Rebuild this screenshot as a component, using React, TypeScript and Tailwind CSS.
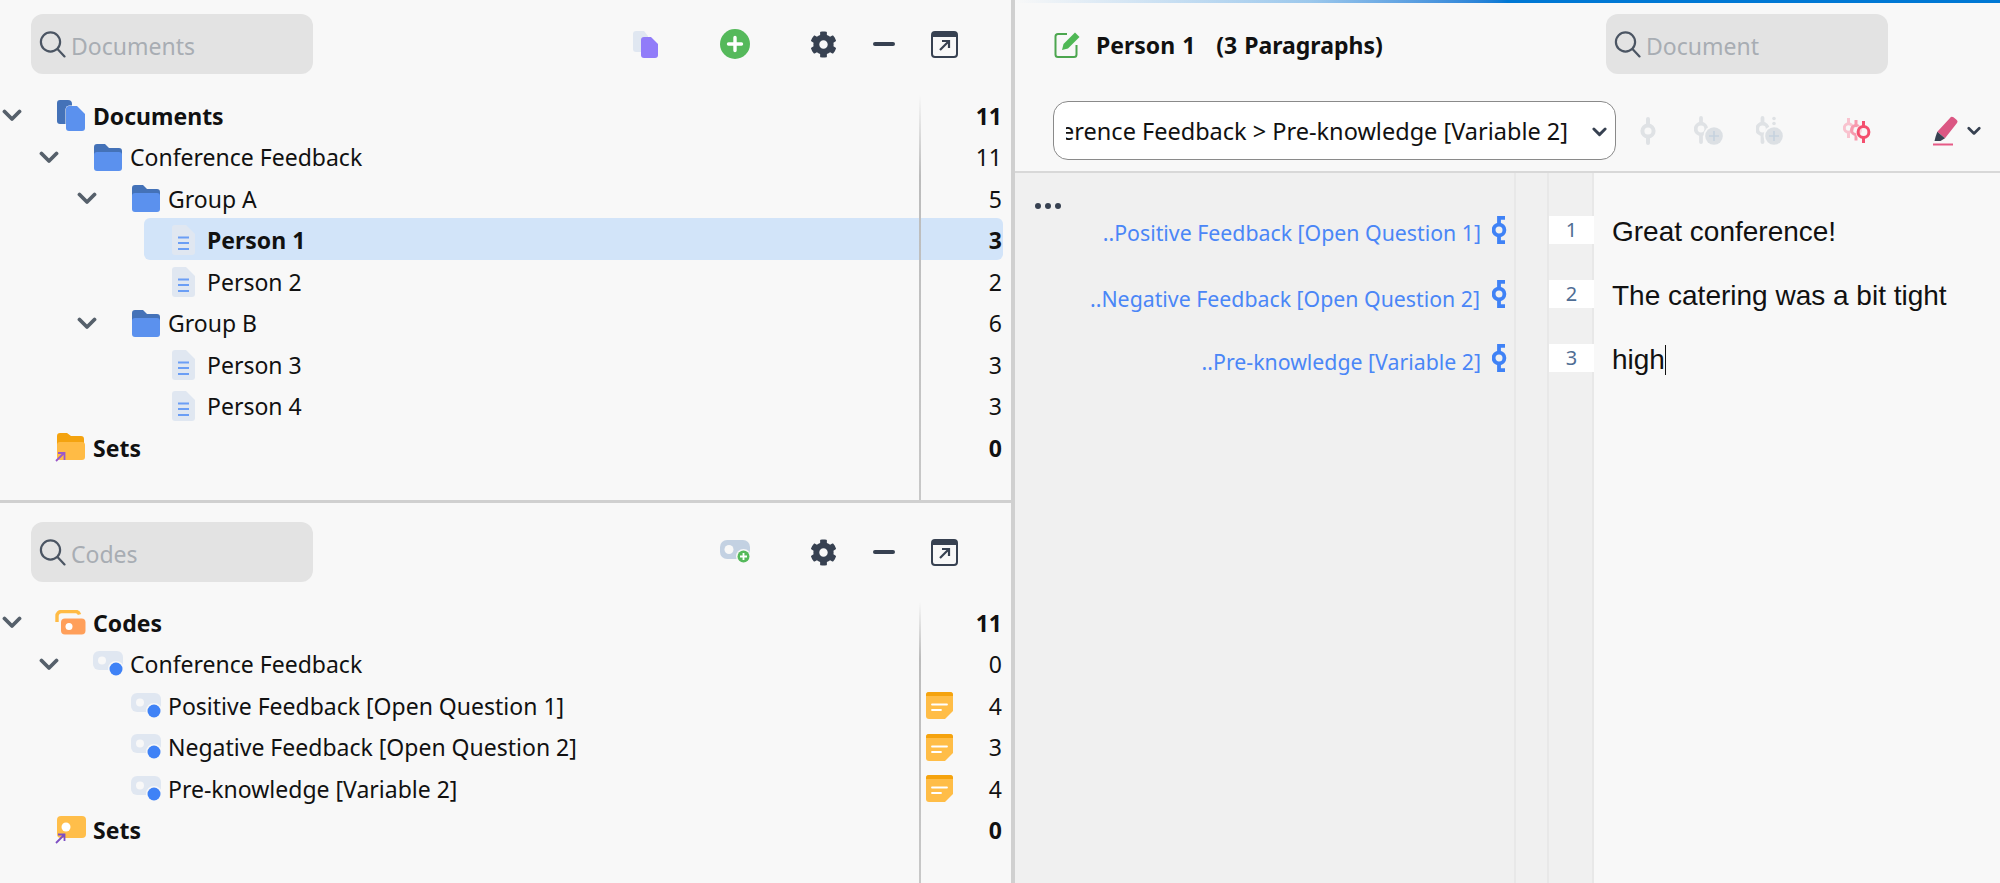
import React from "react";
import { FaCog } from "react-icons/fa";

const Search = () => (
  <svg width="27" height="27" viewBox="0 0 27 27" fill="none" stroke="#4b5563" strokeWidth="2.2" strokeLinecap="round" className="shrink-0">
    <circle cx="11.5" cy="11" r="9.6" />
    <path d="M18.5 18l7 7.4" />
  </svg>
);

const Chevron = ({ small, mid }: { small?: boolean; mid?: boolean }) => (
  <svg width={small ? 14 : mid ? 15 : 20} height={small ? 10 : mid ? 10 : 13} viewBox="0 0 20 13" fill="none" stroke={small || mid ? "#374151" : "#56606b"} strokeWidth="3.8" strokeLinecap="round" strokeLinejoin="round">
    <path d="M2.5 2.5 10 10l7.5-7.5" />
  </svg>
);

const DocsIcon = () => (
  <svg width="28" height="31" viewBox="0 0 28 31">
    <path d="M3 0h8a4 4 0 0 1 4 4v20H3a3 3 0 0 1-3-3V3a3 3 0 0 1 3-3z" fill="#4472b8" />
    <path d="M12 6h8l8 8v14a3 3 0 0 1-3 3H12a3 3 0 0 1-3-3V9a3 3 0 0 1 3-3z" fill="#f8f8f8" stroke="#f8f8f8" strokeWidth="1" />
    <path d="M12 6h8l8 8v14a3 3 0 0 1-3 3H12a3 3 0 0 1-3-3V9a3 3 0 0 1 3-3z" fill="#5b91ee" />
  </svg>
);

const Folder = () => (
  <svg width="28" height="27" viewBox="0 0 28 27">
    <path d="M3 0h8l4 4h10a3 3 0 0 1 3 3v8H0V3a3 3 0 0 1 3-3z" fill="#4472b8" />
    <path d="M3 8h22a3 3 0 0 1 3 3v13a3 3 0 0 1-3 3H3a3 3 0 0 1-3-3V11a3 3 0 0 1 3-3z" fill="#5b91ee" />
  </svg>
);

const DocIcon = () => (
  <svg width="23" height="30" viewBox="0 0 23 30">
    <path d="M3 0h11l9 9v18a3 3 0 0 1-3 3H3a3 3 0 0 1-3-3V3a3 3 0 0 1 3-3z" fill="#e0e7f1" />
    <path d="M6 12.5h11M6 18h11M6 24h11" stroke="#6b9ef5" strokeWidth="2" />
  </svg>
);

const SetFolder = () => (
  <svg width="31" height="30" viewBox="0 0 31 30">
    <path d="M5 0h7l4 3h10a3 3 0 0 1 3 3v8H2V3a3 3 0 0 1 3-3z" fill="#f4a30f" />
    <path d="M5 9h22a3 3 0 0 1 3 3v12a3 3 0 0 1-3 3H5a3 3 0 0 1-3-3V12a3 3 0 0 1 3-3z" fill="#ffbb45" />
    <path d="M1 28l8-8M3 20h6.500v7" fill="none" stroke="#9b59c9" strokeWidth="1.8" />
  </svg>
);

const CodesRoot = () => (
  <svg width="31" height="25" viewBox="0 0 31 25">
    <path d="M2 12V6a4.500 4.500 0 0 1 4.500-4.500h14a4 4 0 0 1 4 3" fill="none" stroke="#ffbb45" strokeWidth="3.400" />
    <rect x="6" y="8.500" width="24.500" height="16" rx="4" fill="#ff9f5a" />
    <circle cx="14" cy="16.500" r="3.500" fill="#fff" />
  </svg>
);

const CodeSet = () => (
  <svg width="31" height="28" viewBox="0 0 31 28">
    <rect x="2" y="0" width="29" height="22" rx="4" fill="#ffbe4a" />
    <circle cx="11" cy="11" r="4.500" fill="#fff" />
    <path d="M1 27l8-8M3 18.500h6.500V25" fill="none" stroke="#7d4fc4" strokeWidth="1.8" />
  </svg>
);

const CodeItem = () => (
  <svg width="30" height="26" viewBox="0 0 30 26">
    <rect x="0" y="0" width="30" height="19" rx="6" fill="#e0e7f1" />
    <circle cx="9" cy="9.500" r="4" fill="#f8f8f8" />
    <circle cx="23" cy="18" r="8" fill="#f8f8f8" />
    <circle cx="23" cy="18" r="6.500" fill="#3f82f6" />
  </svg>
);

const Memo = () => (
  <svg width="27" height="27" viewBox="0 0 27 27">
    <path d="M3 0h21a3 3 0 0 1 3 3v16l-8 8H3a3 3 0 0 1-3-3V3a3 3 0 0 1 3-3z" fill="#ffbd47" />
    <path d="M3 0h21a3 3 0 0 1 3 3v1H0V3a3 3 0 0 1 3-3z" fill="#f5a30e" />
    <path d="M6 12.500h15M6 18h9" stroke="#fff" strokeWidth="1.800" strokeLinecap="round" />
  </svg>
);

const PenIcon = () => (
  <svg width="26" height="28" viewBox="0 0 26 28" fill="none">
    <path d="M13 4H4a2.500 2.500 0 0 0-2.500 2.500v18A2.500 2.500 0 0 0 4 27h16a2.500 2.500 0 0 0 2.500-2.500V15" stroke="#4ca64f" strokeWidth="2" />
    <path d="M8 20l1.500-6L21 2.500 25.500 7 14 18.500z" fill="#4fb855" />
  </svg>
);

const AddDoc = () => (
  <svg width="25" height="27" viewBox="0 0 25 27">
    <path d="M3 0h8l4 5v16H3a3 3 0 0 1-3-3V3a3 3 0 0 1 3-3z" fill="#e0e7f1" />
    <path d="M11 6h7l7 7v11a3 3 0 0 1-3 3H11a3 3 0 0 1-3-3V9a3 3 0 0 1 3-3z" fill="#917cf9" />
  </svg>
);

const GreenPlus = () => (
  <svg width="30" height="30" viewBox="0 0 30 30">
    <circle cx="15" cy="15" r="15" fill="#55b95b" />
    <path d="M15 8.500v13M8.500 15h13" stroke="#fff" strokeWidth="3.400" strokeLinecap="round" />
  </svg>
);

const AddCode = () => (
  <svg width="31" height="24" viewBox="0 0 31 24">
    <rect x="0" y="0" width="30" height="19" rx="7" fill="#c3d1e2" />
    <circle cx="9" cy="9.500" r="4.500" fill="#f8f8f8" />
    <circle cx="23.500" cy="16.500" r="7.500" fill="#f8f8f8" />
    <circle cx="23.500" cy="16.500" r="6" fill="#55b95b" />
    <path d="M23.500 13v7M20 16.500h7" stroke="#fff" strokeWidth="1.800" />
  </svg>
);

const Minus = () => <div className="w-[22px] h-[4px] rounded-full bg-[#374151]" />;

const Expand = () => (
  <svg width="27" height="27" viewBox="0 0 27 27" fill="none">
    <rect x="1" y="1" width="25" height="25" rx="3" stroke="#374151" strokeWidth="2" />
    <path d="M1 3a2 2 0 0 1 2-2h21a2 2 0 0 1 2 2v3H1z" fill="#374151" />
    <path d="M9 19l9-9M11 10h7v7" stroke="#374151" strokeWidth="2.200" />
  </svg>
);

const Node = ({ color = "#dfe2e5" }: { color?: string }) => (
  <svg width="16" height="28" viewBox="0 0 16 28" fill="none" stroke={color} strokeWidth="4">
    <circle cx="8" cy="14" r="5.600" />
    <path d="M8 2v6M8 20v6" strokeLinecap="round" />
  </svg>
);

const NodePlus = ({ dots }: { dots?: boolean }) => (
  <svg width="30" height="29" viewBox="0 0 30 29" fill="none">
    <circle cx={dots ? 6.500 : 7} cy="13" r="5.300" stroke="#dfe2e5" strokeWidth="3.800" />
    <path d={dots ? "M6.500 2v5M6.500 19v7" : "M7 2v5M7 19v7"} stroke="#dfe2e5" strokeWidth="3.800" strokeLinecap="round" />
    {dots && <circle cx="18" cy="2.500" r="1.800" fill="#dfe2e5" />}
    {dots && <circle cx="18" cy="7.500" r="1.800" fill="#dfe2e5" />}
    <circle cx={dots ? 18 : 20} cy="20" r="10.500" fill="#f8f8f8" />
    <circle cx={dots ? 18 : 20} cy="20" r="8.800" fill="#dce0e4" />
    <path d={dots ? "M18 15v10M13 20h10" : "M20 15v10M15 20h10"} stroke="#c6d2de" strokeWidth="1.600" />
  </svg>
);

const RedNodes = () => (
  <svg width="28" height="27" viewBox="0 0 28 27" fill="none">
    <g stroke="#f9c3cf" strokeWidth="3">
      <circle cx="5.500" cy="11" r="4.200" />
      <path d="M5.500 1v6M5.500 15v6" />
    </g>
    <g stroke="#f79aae" strokeWidth="3">
      <circle cx="13" cy="13" r="4.500" />
      <path d="M13 3v6M13 17.500v6" />
    </g>
    <circle cx="20.500" cy="15" r="8" fill="#f8f8f8" fillOpacity="0.600" />
    <g stroke="#f4506f" strokeWidth="3">
      <circle cx="20.500" cy="15" r="5.400" />
      <path d="M20.500 4v5.500M20.500 20.500V26" />
    </g>
  </svg>
);

const Highlighter = () => (
  <svg width="26" height="31" viewBox="0 0 26 31">
    <path d="M18 3a2.500 2.500 0 0 1 3.500-.800l3 2.500a2.500 2.500 0 0 1 .3 3.500L13 23.300 5.300 16.700z" fill="#db5783" />
    <path d="M5.300 16.700 13 23.300 8.500 26H2.500L3.500 22z" fill="#374151" />
    <path d="M1 29.500h20" stroke="#e65a86" strokeWidth="2" />
  </svg>
);

const LinkNode = () => (
  <svg width="15" height="28" viewBox="0 0 15 28" fill="none" stroke="#3f82f6" strokeWidth="3.800">
    <circle cx="7" cy="14" r="5.400" />
    <path d="M7 8.600V1.900h6M7 19.400v6.700h6" />
  </svg>
);

const SearchBox = ({ label }: { label: string }) => (
  <div className="w-[282px] h-[60px] rounded-[12px] bg-[#e3e3e3] flex items-center pl-[8px] gap-[5px] shrink-0">
    <Search />
    <span className="text-[23px] text-[#a8adb3] relative top-[2px]">{label}</span>
  </div>
);

type RowProps = {
  indent: string;
  chevron?: boolean;
  icon: React.ReactNode;
  iconBox: string;
  label: string;
  count: number;
  bold?: boolean;
  selected?: boolean;
  memo?: boolean;
};

const Row = ({ indent, chevron, icon, iconBox, label, count, bold, selected, memo }: RowProps) => (
  <div className={`flex items-center h-[41.5px] text-[23px] text-[#111] ${bold ? "font-bold" : ""}`}>
    <div className={`relative flex items-center h-full flex-1 mr-[8px] ${indent}`}>
      {selected && <div className="absolute inset-x-0 -top-[1.500px] bottom-[1px] rounded-[6px] bg-[#d2e4f9]" />}
      <div className="relative w-[24px] h-full flex items-center justify-center shrink-0">{chevron && <Chevron />}</div>
      <div className={`relative flex items-center shrink-0 ${iconBox}`}>{icon}</div>
      <span className="relative whitespace-nowrap">{label}</span>
      <div className="relative ml-auto flex items-center pr-[1px]">
        {memo && <Memo />}
        <span className="w-[49px] text-right">{count}</span>
      </div>
    </div>
  </div>
);

const Divider = () => (
  <div className="absolute top-0 bottom-0 left-[919px] w-[2px] bg-linear-to-b from-[#f8f8f8] via-[#bcbcbc] via-20% to-[#c8c8c8] pointer-events-none z-10" />
);

const PanelTools = ({ first }: { first: React.ReactNode }) => (
  <div className="flex items-center h-[60px] shrink-0 pl-[31px]">{first}</div>
);

const Para = ({ n, label, text, labelClass }: { n: number; label: string; text: React.ReactNode; labelClass: string }) => (
  <div className="flex h-[28px] items-center">
    <div className="w-[501px] flex justify-end items-center pr-[9px] gap-[11px]">
      <span className={`text-[#4a86f7] text-[21.300px] whitespace-nowrap relative ${labelClass}`}>{label}</span>
      <LinkNode />
    </div>
    <div className="w-[33px]" />
    <div className="w-[45px] h-[28px] bg-white flex items-center justify-center text-[#4f6d94] text-[20px]">{n}</div>
    <div className="pl-[18px] font-['Liberation_Sans',sans-serif] text-[28px] text-[#111] whitespace-nowrap relative top-[2px]">{text}</div>
  </div>
);

export default function App() {
  return (
    <div className="w-[2000px] h-[883px] flex bg-[#f8f8f8] overflow-hidden font-['Noto_Sans',sans-serif]">
      <div className="w-[1011px] flex flex-col shrink-0">
        <div className="h-[500px] flex flex-col shrink-0 pt-[14px]">
          <PanelTools
            first={
              <>
                <SearchBox label="Documents" />
                <div className="ml-[320px]"><AddDoc /></div>
                <div className="ml-[62px]"><GreenPlus /></div>
                <FaCog className="ml-[60px] w-[27px] h-[27px] text-[#374151]" />
                <div className="ml-[36px]"><Minus /></div>
                <div className="ml-[36px]"><Expand /></div>
              </>
            }
          />
          <div className="relative flex-1 mt-[21px] pb-[5px]">
            <Divider />
            <Row indent="pl-0" chevron icon={<DocsIcon />} iconBox="w-[69px] pl-[33px]" label="Documents" count={11} bold />
            <Row indent="pl-[37px]" chevron icon={<Folder />} iconBox="w-[69px] pl-[33px]" label="Conference Feedback" count={11} />
            <Row indent="pl-[75px]" chevron icon={<Folder />} iconBox="w-[69px] pl-[33px]" label="Group A" count={5} />
            <div className="ml-[144px]">
              <Row indent="pl-0" selected icon={<DocIcon />} iconBox="w-[39px] pl-[4px]" label="Person 1" count={3} bold />
            </div>
            <div className="ml-[144px]">
              <Row indent="pl-0" icon={<DocIcon />} iconBox="w-[39px] pl-[4px]" label="Person 2" count={2} />
            </div>
            <Row indent="pl-[75px]" chevron icon={<Folder />} iconBox="w-[69px] pl-[33px]" label="Group B" count={6} />
            <div className="ml-[144px]">
              <Row indent="pl-0" icon={<DocIcon />} iconBox="w-[39px] pl-[4px]" label="Person 3" count={3} />
            </div>
            <div className="ml-[144px]">
              <Row indent="pl-0" icon={<DocIcon />} iconBox="w-[39px] pl-[4px]" label="Person 4" count={3} />
            </div>
            <Row indent="pl-0" icon={<SetFolder />} iconBox="w-[69px] pl-[31px]" label="Sets" count={0} bold />
          </div>
        </div>
        <div className="h-[3px] bg-[#d0d0d0] shrink-0" />
        <div className="flex-1 flex flex-col pt-[19px] min-h-0">
          <PanelTools
            first={
              <>
                <SearchBox label="Codes" />
                <div className="ml-[407px]"><AddCode /></div>
                <FaCog className="ml-[59px] w-[27px] h-[27px] text-[#374151]" />
                <div className="ml-[36px]"><Minus /></div>
                <div className="ml-[36px]"><Expand /></div>
              </>
            }
          />
          <div className="relative flex-1 mt-[20px]">
            <Divider />
            <Row indent="pl-0" chevron icon={<CodesRoot />} iconBox="w-[69px] pl-[31px]" label="Codes" count={11} bold />
            <Row indent="pl-[37px]" chevron icon={<CodeItem />} iconBox="w-[69px] pl-[32px]" label="Conference Feedback" count={0} />
            <Row indent="pl-[75px]" icon={<CodeItem />} iconBox="w-[69px] pl-[32px]" label="Positive Feedback [Open Question 1]" count={4} memo />
            <Row indent="pl-[75px]" icon={<CodeItem />} iconBox="w-[69px] pl-[32px]" label="Negative Feedback [Open Question 2]" count={3} memo />
            <Row indent="pl-[75px]" icon={<CodeItem />} iconBox="w-[69px] pl-[32px]" label="Pre-knowledge [Variable 2]" count={4} memo />
            <Row indent="pl-0" icon={<CodeSet />} iconBox="w-[69px] pl-[31px]" label="Sets" count={0} bold />
          </div>
        </div>
      </div>
      <div className="w-[4px] bg-[#d0d0d0] shrink-0" />
      <div className="flex-1 flex flex-col min-w-0">
        <div className="h-[3px] bg-linear-to-r from-[#f8f8f8] via-[#9cc8ec] via-30% to-[#0078d4] to-50% shrink-0" />
        <div className="h-[170px] flex flex-col shrink-0 border-b-2 border-[#d8d8d8]">
          <div className="flex items-center h-[60px] mt-[11px] pl-[39px]">
            <PenIcon />
            <span className="ml-[16px] w-[510px] font-bold text-[23px] text-[#111] whitespace-pre relative top-[1px] [word-spacing:1px]">Person 1   (3 Paragraphs)</span>
            <SearchBox label="Document" />
          </div>
          <div className="flex items-center h-[59px] mt-[27px] pl-[38px]">
            <div className="w-[563px] h-[59px] bg-white border-[1.500px] border-[#8a8a8a] rounded-[15px] flex items-center pl-[12px] pr-[8px] shrink-0">
              <div className="flex-1 overflow-hidden flex justify-end min-w-0 mr-[24px]">
                <span className="text-[23.500px] text-[#111] whitespace-nowrap shrink-0 relative top-[1px]">Conference Feedback &gt; Pre-knowledge [Variable 2]</span>
              </div>
              <div className="relative top-[1px] flex"><Chevron mid /></div>
            </div>
            <div className="ml-[24px]"><Node /></div>
            <div className="ml-[38px]"><NodePlus /></div>
            <div className="ml-[32px]"><NodePlus dots /></div>
            <div className="ml-[57px]"><RedNodes /></div>
            <div className="ml-[61px]"><Highlighter /></div>
            <div className="ml-[9px] flex"><Chevron small /></div>
          </div>
        </div>
        <div className="flex-1 relative">
          <div className="absolute top-0 bottom-0 left-0 w-[579px] flex pointer-events-none">
            <div className="w-[501px] bg-[#f0f0f0] border-r-2 border-[#e8e8e8]" />
            <div className="w-[33px] bg-[#f0f0f0] border-r-2 border-[#e8e8e8]" />
            <div className="w-[45px] bg-[#f0f0f0] border-r-2 border-[#e8e8e8]" />
          </div>
          <div className="relative pt-[43px] flex flex-col gap-[36px]">
            <div className="absolute left-[20px] top-[30px] flex gap-[4px]">
              <div className="w-[6px] h-[6px] rounded-full bg-[#374151]" />
              <div className="w-[6px] h-[6px] rounded-full bg-[#374151]" />
              <div className="w-[6px] h-[6px] rounded-full bg-[#374151]" />
            </div>
            <Para n={1} labelClass="top-[3px]" label="..Positive Feedback [Open Question 1]" text="Great conference!" />
            <Para n={2} labelClass="top-[5px] right-[1px]" label="..Negative Feedback [Open Question 2]" text="The catering was a bit tight" />
            <Para
              n={3}
              labelClass="top-[4px]"
              label="..Pre-knowledge [Variable 2]"
              text={
                <span className="inline-flex items-center">
                  high
                  <span className="w-[1.500px] h-[30px] bg-[#111] inline-block" />
                </span>
              }
            />
          </div>
        </div>
      </div>
    </div>
  );
}
